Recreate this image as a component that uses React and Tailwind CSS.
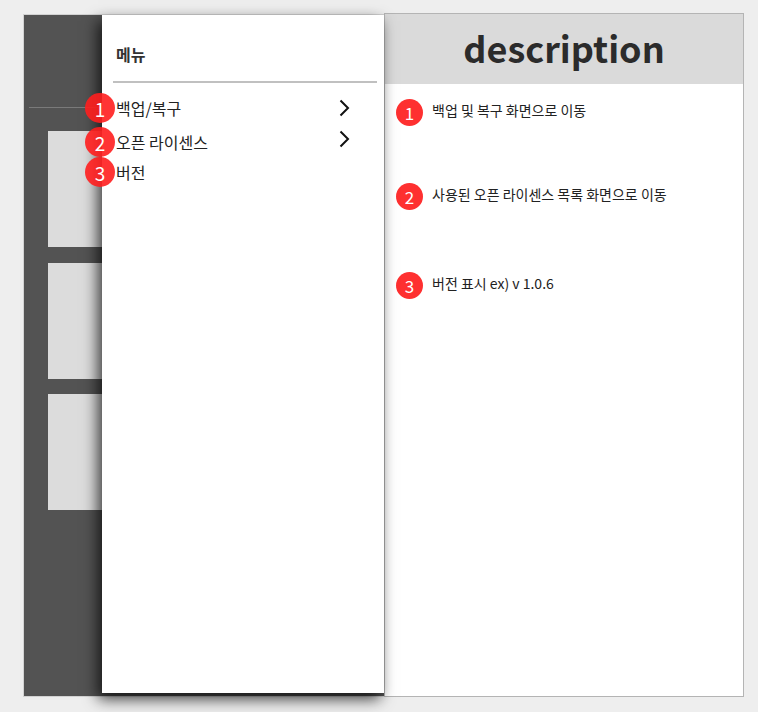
const font = { fontFamily: '"Noto Sans CJK KR", "Noto Sans", sans-serif' };

const Chevron = () => (
  <svg width="11" height="18" viewBox="0 0 11 18" fill="none">
    <path d="M1.5 1.5 L9 9 L1.5 16.5" stroke="#111" strokeWidth="2" />
  </svg>
);

const menuItems = [
  { n: 1, label: "백업/복구", arrow: true, row: "h-[34px]" },
  { n: 2, label: "오픈 라이센스", arrow: true, row: "h-[34px]" },
  { n: 3, label: "버전", arrow: false, row: "h-[28px] -mt-[1px]" },
];

const descItems = [
  { n: 1, text: "백업 및 복구 화면으로 이동", mt: "mt-[15px]" },
  { n: 2, text: "사용된 오픈 라이센스 목록 화면으로 이동", mt: "mt-[57px]" },
  { n: 3, text: "버전 표시 ex) v 1.0.6", mt: "mt-[62px]" },
];

export default function App() {
  return (
    <div
      className="w-[758px] h-[712px] bg-[#eeeeee] flex items-start pl-[23px] pt-[13px]"
      style={font}
    >
      {/* phone frame */}
      <div className="relative mt-[1px] w-[361px] h-[683px] border border-r-0 border-[#d2d2d2] bg-[#535353]">
        <div className="ml-[5px] mt-[92px] w-[80px] h-[1px] bg-[#7a7a7a]" />
        <div className="ml-[24px] mt-[23px] flex flex-col">
          <div className="w-[200px] h-[116px] bg-[#dcdcdc]" />
          <div className="w-[200px] h-[116px] bg-[#dcdcdc] mt-[16px]" />
          <div className="w-[200px] h-[116px] bg-[#dcdcdc] mt-[15px]" />
        </div>

        {/* drawer */}
        <div className="absolute left-[78px] top-0 w-[282px] h-[678px] bg-white shadow-[-4px_6px_14px_rgba(0,0,0,0.75)]">
          <div className="pl-[14px] pt-[27px] text-[16px] leading-[24px] font-bold text-[#333]">
            메뉴
          </div>
          <div className="ml-[11px] mr-[7px] mt-[15px] h-[2px] bg-[#c0c0c0]" />
          <div className="mt-[8px] flex flex-col">
            {menuItems.map((it, i) => (
              <div
                key={it.n}
                className={`relative flex items-center justify-between pl-[14px] pr-[34px] ${it.row}`}
              >
                <span className="text-[16px] text-[#222]">{it.label}</span>
                {it.arrow && (
                  <span className={i === 1 ? "-mt-[6px]" : ""}>
                    <Chevron />
                  </span>
                )}
                <div className="absolute -left-[17px] top-1/2 -translate-y-1/2 w-[30px] h-[30px] rounded-full bg-[#ff1e1e]/90 flex items-center justify-center text-white text-[19px] leading-none">
                  {it.n}
                </div>
              </div>
            ))}
          </div>
        </div>
      </div>

      {/* description panel */}
      <div className="w-[360px] h-[684px] border border-[#b4b4b4] bg-white">
        <div className="h-[70px] bg-[#dadada] flex items-center justify-center">
          <span className="text-[36px] font-bold text-[#2b2b2b] leading-none -mt-[5px]">
            description
          </span>
        </div>
        {descItems.map((it) => (
          <div key={it.n} className={`flex items-center pl-[11px] ${it.mt}`}>
            <div className="w-[27px] h-[27px] rounded-full bg-[#fe3030] flex items-center justify-center text-white text-[17px] leading-none">
              {it.n}
            </div>
            <span className="ml-[9px] text-[14px] text-[#222] -mt-[4px]">{it.text}</span>
          </div>
        ))}
      </div>
    </div>
  );
}
